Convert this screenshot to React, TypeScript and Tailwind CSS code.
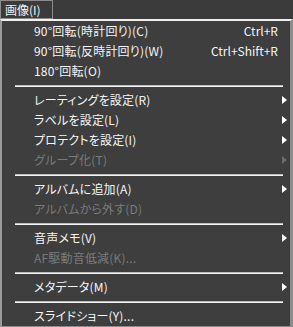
type Item =
  | { kind: "sep" }
  | { kind: "item"; label: string; shortcut?: string; sub?: boolean; disabled?: boolean };

const items: Item[] = [
  { kind: "item", label: "90°回転(時計回り)(C)", shortcut: "Ctrl+R" },
  { kind: "item", label: "90°回転(反時計回り)(W)", shortcut: "Ctrl+Shift+R" },
  { kind: "item", label: "180°回転(O)" },
  { kind: "sep" },
  { kind: "item", label: "レーティングを設定(R)", sub: true },
  { kind: "item", label: "ラベルを設定(L)", sub: true },
  { kind: "item", label: "プロテクトを設定(I)", sub: true },
  { kind: "item", label: "グループ化(T)", sub: true, disabled: true },
  { kind: "sep" },
  { kind: "item", label: "アルバムに追加(A)", sub: true },
  { kind: "item", label: "アルバムから外す(D)", disabled: true },
  { kind: "sep" },
  { kind: "item", label: "音声メモ(V)", sub: true },
  { kind: "item", label: "AF駆動音低減(K)...", disabled: true },
  { kind: "sep" },
  { kind: "item", label: "メタデータ(M)", sub: true },
  { kind: "sep" },
  { kind: "item", label: "スライドショー(Y)..." },
];

function Arrow({ disabled }: { disabled?: boolean }) {
  return (
    <svg width="5" height="8" viewBox="0 0 5 8">
      <polygon points="0,0 5,4 0,8" fill={disabled ? "#6a6a6a" : "#ffffff"} />
    </svg>
  );
}

export default function App() {
  return (
    <div className="w-[293px] h-[327px] bg-[#3b3b3b] font-['Noto_Sans_CJK_JP','Noto_Sans',sans-serif] text-[12px] [font-feature-settings:'palt'] overflow-hidden select-none">
      <div className="h-[19px] flex">
        <div className="w-[53px] h-[19px] border border-[#8c8c8c] bg-[#3b3b3b] text-[#f2f2f2] flex items-center pl-[4px] leading-none">
          画像(I)
        </div>
      </div>
      <div className="border-t-2 border-t-[#f0f0f0] border-l-2 border-l-[#9a9a9a] border-r-[3px] border-r-[#8c8c8c] border-b border-b-[#8c8c8c] bg-[#3e3e3e]">
        {items.map((it, i) =>
          it.kind === "sep" ? (
            <div key={i} className="h-[9px] pt-[4px] pl-[13px] pr-[7px]">
              <div className="border-t border-t-[#bdbdbd] border-b border-b-[#f4f4f4]" />
            </div>
          ) : (
            <div
              key={i}
              className={`h-[20px] flex items-center leading-none ${
                it.disabled ? "text-[#7a7a7a]" : "text-[#f5f5f5]"
              }`}
            >
              <span className="flex-1 pl-[32px] whitespace-nowrap tracking-[0.2px]">{it.label}</span>
              {it.shortcut && <span className="whitespace-nowrap">{it.shortcut}</span>}
              <span className="w-[12px] flex justify-end pr-[3px]">
                {it.sub && <Arrow disabled={it.disabled} />}
              </span>
            </div>
          )
        )}
      </div>
    </div>
  );
}
